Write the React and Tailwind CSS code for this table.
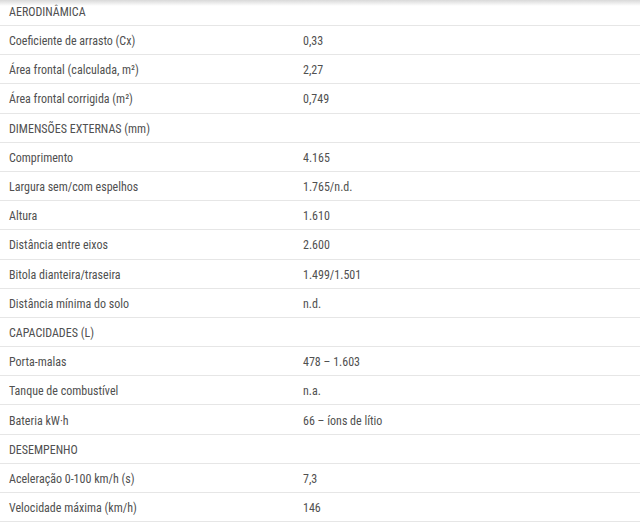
const sections = [
  {
    title: 'AERODINÂMICA',
    rows: [
      ['Coeficiente de arrasto (Cx)', '0,33'],
      ['Área frontal (calculada, m²)', '2,27'],
      ['Área frontal corrigida (m²)', '0,749'],
    ],
  },
  {
    title: 'DIMENSÕES EXTERNAS (mm)',
    rows: [
      ['Comprimento', '4.165'],
      ['Largura sem/com espelhos', '1.765/n.d.'],
      ['Altura', '1.610'],
      ['Distância entre eixos', '2.600'],
      ['Bitola dianteira/traseira', '1.499/1.501'],
      ['Distância mínima do solo', 'n.d.'],
    ],
  },
  {
    title: 'CAPACIDADES (L)',
    rows: [
      ['Porta-malas', '478 – 1.603'],
      ['Tanque de combustível', 'n.a.'],
      ['Bateria kW·h', '66 – íons de lítio'],
    ],
  },
  {
    title: 'DESEMPENHO',
    rows: [
      ['Aceleração 0-100 km/h (s)', '7,3'],
      ['Velocidade máxima (km/h)', '146'],
    ],
  },
];

function Row({ label, value }) {
  return (
    <div className="grid grid-cols-[295px_1fr] h-[29.2px] items-center pt-[2px] border-b border-[#e6e6e6]">
      <div className="pl-[9px]">{label}</div>
      <div className="pl-2">{value}</div>
    </div>
  );
}

export default function App() {
  return (
    <div className="relative h-[523px] overflow-hidden bg-white text-[12px] font-stretch-semi-condensed text-[#505050] font-['Roboto',sans-serif]">
      <div className="pointer-events-none absolute inset-x-0 top-0 h-[6px] bg-gradient-to-b from-[#d9d9d9] to-transparent" />
      <div className="-mt-[3.2px]">
        {sections.map((s) => (
          <div key={s.title}>
            <Row label={s.title} value="" />
            {s.rows.map(([l, v]) => (
              <Row key={l} label={l} value={v} />
            ))}
          </div>
        ))}
      </div>
    </div>
  );
}
